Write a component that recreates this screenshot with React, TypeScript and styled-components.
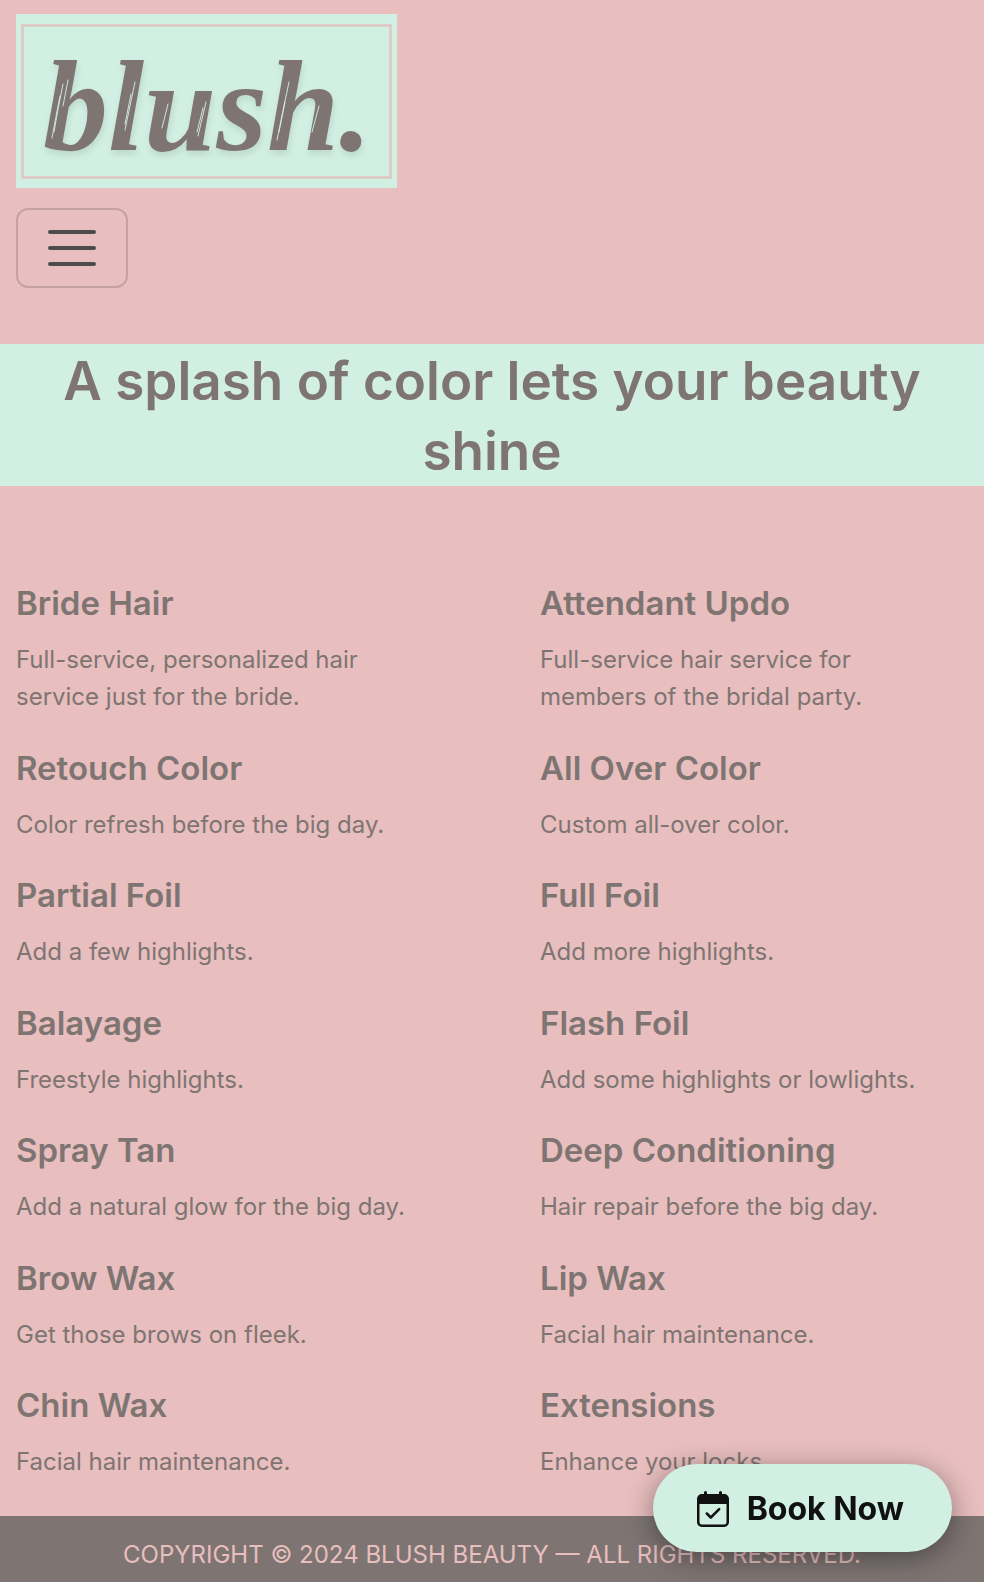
import React from "react";
import styled, { createGlobalStyle } from "styled-components";

const colors = {
  blush: "#e8bebe",
  mint: "#d2efe3",
  taupe: "#7e7573",
  ink: "#111111",
};

const GlobalStyle = createGlobalStyle`
  *, *::before, *::after { box-sizing: border-box; }
  body {
    margin: 0;
    background: ${colors.blush};
    color: ${colors.taupe};
    font-family: Inter, "Liberation Sans", sans-serif;
    font-size: 24px;
    line-height: 37px;
  }
`;

const Page = styled.div`
  display: flex;
  flex-direction: column;
  min-height: 100vh;
`;

const Header = styled.header`
  display: flex;
  flex-direction: column;
  align-items: flex-start;
  gap: 20px;
  padding: 14px 16px 56px;
`;

const LogoLink = styled.a`
  display: block;
  padding: 10px 5px 9px;
  background: ${colors.mint};
`;

const LogoArt = styled.svg`
  display: block;
`;

const LogoText = styled.text`
  font-family: "Liberation Serif", serif;
  font-size: 130px;
  font-style: italic;
  font-weight: 700;
  fill: ${colors.taupe};
  filter: drop-shadow(1px 4px 3px rgba(60, 90, 80, 0.15));
`;

const MenuToggle = styled.button`
  display: flex;
  flex-direction: column;
  align-items: center;
  justify-content: center;
  gap: 12px;
  width: 112px;
  height: 80px;
  padding: 0;
  border: 2px solid rgba(0, 0, 0, 0.15);
  border-radius: 12px;
  background: transparent;
  cursor: pointer;
`;

const MenuBar = styled.span`
  width: 48px;
  height: 4px;
  border-radius: 2px;
  background: #504b4b;
`;

const Banner = styled.h1`
  margin: 0;
  padding: 2px 16px 0;
  background: ${colors.mint};
  font-size: 53px;
  font-weight: 600;
  line-height: 70px;
  text-align: center;
`;

const Services = styled.main`
  display: grid;
  flex: 1;
  grid-template-columns: 1fr 1fr;
  align-content: space-between;
  column-gap: 96px;
  row-gap: 31px;
  padding: 96px 16px 36px;
`;

const ServiceTitle = styled.h2`
  margin: 0 0 17px;
  font-size: 33px;
  font-weight: 600;
  line-height: 42px;
`;

const ServiceText = styled.p`
  margin: 0;
  padding-right: 24px;
`;

const Footer = styled.footer`
  padding: 20px 16px 9px;
  background: ${colors.taupe};
  color: ${colors.blush};
  text-align: center;
  text-transform: uppercase;
`;

const BookButton = styled.button`
  position: fixed;
  right: 32px;
  bottom: 30px;
  display: flex;
  align-items: center;
  gap: 18px;
  height: 88px;
  padding: 2px 48px 0 44px;
  border: 0;
  border-radius: 44px;
  background: ${colors.mint};
  box-shadow: 0 6px 28px rgba(0, 0, 0, 0.4);
  color: ${colors.ink};
  font: 700 32px/40px Inter, "Liberation Sans", sans-serif;
  white-space: nowrap;
  cursor: pointer;
`;

const services = [
  ["Bride Hair", "Full-service, personalized hair service just for the bride."],
  ["Attendant Updo", "Full-service hair service for members of the bridal party."],
  ["Retouch Color", "Color refresh before the big day."],
  ["All Over Color", "Custom all-over color."],
  ["Partial Foil", "Add a few highlights."],
  ["Full Foil", "Add more highlights."],
  ["Balayage", "Freestyle highlights."],
  ["Flash Foil", "Add some highlights or lowlights."],
  ["Spray Tan", "Add a natural glow for the big day."],
  ["Deep Conditioning", "Hair repair before the big day."],
  ["Brow Wax", "Get those brows on fleek."],
  ["Lip Wax", "Facial hair maintenance."],
  ["Chin Wax", "Facial hair maintenance."],
  ["Extensions", "Enhance your locks."],
];

function Logo() {
  return (
    <LogoLink href="#" aria-label="blush.">
      <LogoArt width="371" height="155" viewBox="0 0 371 155">
        <rect x="1.5" y="1.5" width="368" height="152" fill="none" stroke="#dec6c2" strokeWidth="2.5" />
        <LogoText x="22" y="126">blush.</LogoText>
        {/* dry-brush streaks */}
        <g fill="none" stroke={colors.mint} strokeWidth="0.9" strokeLinecap="round">
          <path d="M42 60Q37 84 33 108M39 72Q35 92 31 114M47 56L42 82" />
          <path d="M114 58Q109 82 104 106M110 70L104 100" />
          <path d="M185 78L177 112M182 84L176 108M147 80L141 104" />
          <path d="M268 58Q262 86 256 116M264 78L258 108M298 82L291 108" />
        </g>
      </LogoArt>
    </LogoLink>
  );
}

function CalendarIcon() {
  return (
    <svg width="32" height="36" viewBox="0 0 32 36" fill="none" stroke="currentColor" strokeLinecap="round" strokeLinejoin="round" aria-hidden="true">
      <path d="M8.500 1.500V6M23.500 1.500V6" strokeWidth="3" />
      <rect x="1.250" y="4.250" width="29.500" height="30.500" rx="3.500" strokeWidth="2.500" />
      <path d="M1 13V8a4 4 0 0 1 4-4h22a4 4 0 0 1 4 4v5z" fill="currentColor" stroke="none" />
      <path d="M9.800 22.500l4 4 8.400-8.400" strokeWidth="2.500" />
    </svg>
  );
}

export default function App() {
  return (
    <Page>
      <GlobalStyle />
      <Header>
        <Logo />
        <MenuToggle type="button" aria-label="Toggle navigation">
          <MenuBar />
          <MenuBar />
          <MenuBar />
        </MenuToggle>
      </Header>
      <Banner>A splash of color lets your beauty shine</Banner>
      <Services>
        {services.map(([title, text]) => (
          <article key={title}>
            <ServiceTitle>{title}</ServiceTitle>
            <ServiceText>{text}</ServiceText>
          </article>
        ))}
      </Services>
      <Footer>Copyright © 2024 Blush Beauty — All Rights Reserved.</Footer>
      <BookButton type="button">
        <CalendarIcon />
        Book Now
      </BookButton>
    </Page>
  );
}
